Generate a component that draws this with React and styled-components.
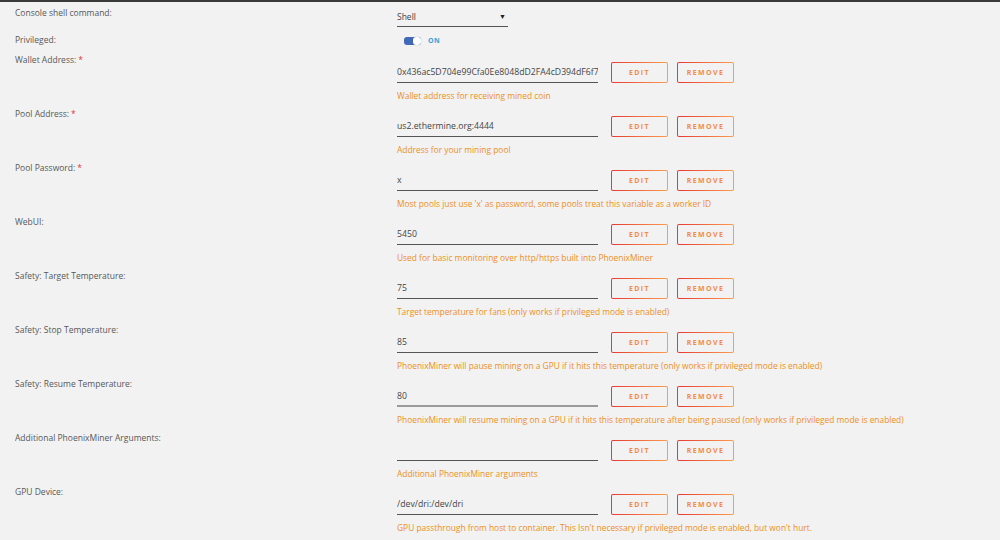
import React from 'react';
import styled, { createGlobalStyle } from 'styled-components';

const GlobalStyle = createGlobalStyle`
  html, body {
    margin: 0;
    padding: 0;
    background: #f2f2f2;
  }
  body {
    font-family: "Open Sans", "Liberation Sans", sans-serif;
  }
`;

const Page = styled.div`
  width: 1000px;
  height: 540px;
  overflow: hidden;
  background: #f2f2f2;
  border-top: 2px solid #3a3a3a;
  box-sizing: border-box;
  padding-top: 5px;
`;

const Row = styled.div`
  display: grid;
  grid-template-columns: 382px 1fr;
  padding-left: 15px;
  height: ${(p) => p.$height || 54}px;
`;

const Label = styled.div`
  font-size: 8.5px;
  line-height: 12px;
  color: #585858;
`;

const Required = styled.span`
  color: #e53935;
  margin-left: 2px;
`;

const Field = styled.div`
  padding-top: ${(p) => p.$top ?? 7}px;
`;

const Controls = styled.div`
  display: flex;
  align-items: center;
  height: 22px;
`;

const Input = styled.div`
  width: 201px;
  height: 21px;
  box-sizing: border-box;
  border-bottom: ${(p) => (p.$focused ? '2px solid #9a9a9a' : '1px solid #555')};
  font-size: 8.7px;
  line-height: 20px;
  color: #444;
  white-space: nowrap;
  overflow: hidden;
`;

const Select = styled.div`
  width: 111px;
  height: 20px;
  box-sizing: border-box;
  border-bottom: 1px solid #555;
  display: flex;
  justify-content: space-between;
  align-items: center;
  font-size: 8.5px;
  color: #444;
`;

const Caret = styled.span`
  font-size: 7px;
  color: #222;
  margin-right: 2px;
`;

const Buttons = styled.div`
  display: flex;
  gap: 9px;
  margin-left: 13px;
`;

const OutlineButton = styled.button`
  width: 57px;
  height: 21px;
  padding: 0;
  border: 1.5px solid transparent;
  border-radius: 2px;
  background:
    linear-gradient(#f2f2f2, #f2f2f2) padding-box,
    linear-gradient(90deg, #e53935, #fb9e4e) border-box;
  font-family: "Open Sans", "Liberation Sans", sans-serif;
  font-size: 7px;
  font-weight: 700;
  letter-spacing: 1.4px;
  color: #f28c45;
`;

const Help = styled.div`
  margin-top: 7px;
  font-size: 8.4px;
  line-height: 12px;
  color: #ee8f22;
  white-space: nowrap;
`;

const ToggleWrap = styled.div`
  display: flex;
  align-items: center;
  gap: 7px;
  padding-left: 7px;
`;

const Track = styled.div`
  width: 17px;
  height: 8px;
  border-radius: 3px;
  background: #4169b8;
  position: relative;
`;

const Knob = styled.div`
  position: absolute;
  right: 0;
  top: 0;
  width: 8px;
  height: 8px;
  border-radius: 3px;
  background: #fff;
  box-shadow: 0 0 1px rgba(0, 0, 0, 0.4);
`;

const ToggleText = styled.span`
  font-size: 7px;
  font-weight: 700;
  color: #3aa0d8;
  letter-spacing: 0.5px;
`;

const fields = [
  {
    label: 'Wallet Address:',
    required: true,
    value: '0x436ac5D704e99Cfa0Ee8048dD2FA4cD394dF6f7',
    help: 'Wallet address for receiving mined coin',
  },
  {
    label: 'Pool Address:',
    required: true,
    value: 'us2.ethermine.org:4444',
    help: 'Address for your mining pool',
  },
  {
    label: 'Pool Password:',
    required: true,
    value: 'x',
    help: "Most pools just use 'x' as password, some pools treat this variable as a worker ID",
  },
  {
    label: 'WebUI:',
    value: '5450',
    help: 'Used for basic monitoring over http/https built into PhoenixMiner',
  },
  {
    label: 'Safety: Target Temperature:',
    value: '75',
    help: 'Target temperature for fans (only works if privileged mode is enabled)',
  },
  {
    label: 'Safety: Stop Temperature:',
    value: '85',
    help: 'PhoenixMiner will pause mining on a GPU if it hits this temperature (only works if privileged mode is enabled)',
  },
  {
    label: 'Safety: Resume Temperature:',
    value: '80',
    focused: true,
    help: 'PhoenixMiner will resume mining on a GPU if it hits this temperature after being paused (only works if privileged mode is enabled)',
  },
  {
    label: 'Additional PhoenixMiner Arguments:',
    value: '',
    help: 'Additional PhoenixMiner arguments',
  },
  {
    label: 'GPU Device:',
    value: '/dev/dri:/dev/dri',
    help: "GPU passthrough from host to container. This Isn't necessary if privileged mode is enabled, but won't hurt.",
  },
];

const App = () => {
  return (
    <Page>
      <GlobalStyle />
      <Row $height={27}>
        <Label>Console shell command:</Label>
        <Field $top={0}>
          <Select>
            <span>Shell</span>
            <Caret>▼</Caret>
          </Select>
        </Field>
      </Row>
      <Row $height={20}>
        <Label>Privileged:</Label>
        <Field $top={2}>
          <ToggleWrap>
            <Track>
              <Knob />
            </Track>
            <ToggleText>ON</ToggleText>
          </ToggleWrap>
        </Field>
      </Row>
      {fields.map((f) => (
        <Row key={f.label}>
          <Label>
            {f.label}
            {f.required && <Required>*</Required>}
          </Label>
          <Field>
            <Controls>
              <Input $focused={f.focused}>{f.value}</Input>
              <Buttons>
                <OutlineButton>EDIT</OutlineButton>
                <OutlineButton>REMOVE</OutlineButton>
              </Buttons>
            </Controls>
            <Help>{f.help}</Help>
          </Field>
        </Row>
      ))}
    </Page>
  );
};

export default App;
